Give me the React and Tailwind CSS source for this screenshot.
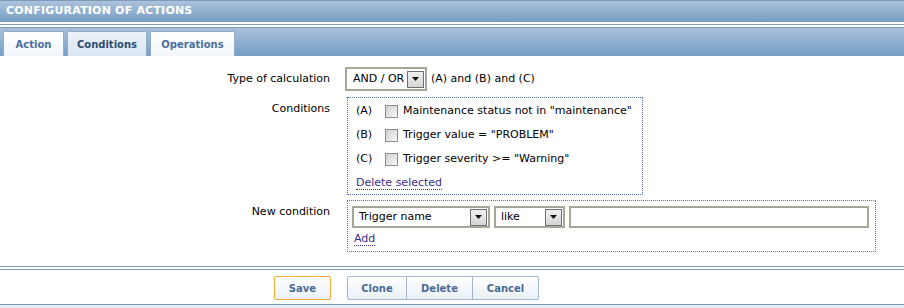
import React from "react";

const font = { fontFamily: '"DejaVu Sans", Verdana, sans-serif' };

function Select({ value, width }) {
  return (
    <div
      className="flex items-center justify-between h-[22px] border-2 border-[#a8a696] bg-white pl-[5px] pr-[1px]"
      style={{ width }}
    >
      <span className="text-[11px] text-black">{value}</span>
      <Arrow />
    </div>
  );
}

function Arrow() {
  return (
    <span className="flex items-center justify-center w-[17px] h-[17px] border border-[#6f6f6f] bg-gradient-to-b from-[#f0f0f0] to-[#d6d6d6]">
      <svg width="7" height="4" viewBox="0 0 7 4">
        <path d="M0 0h7L3.5 4z" fill="#111" />
      </svg>
    </span>
  );
}

function Checkbox() {
  return (
    <span className="inline-block w-[13px] h-[13px] border border-[#8c8c8c] bg-gradient-to-br from-[#d2d2d2] to-[#f6f6f6]" />
  );
}

function CondRow({ tag, text }) {
  return (
    <div className="flex items-center h-[24px]">
      <span className="w-[29px] text-[11px] text-black">{tag}</span>
      <Checkbox />
      <span className="ml-[5px] text-[11px] text-black">{text}</span>
    </div>
  );
}

function Tab({ label, active }) {
  return (
    <div
      className={
        "h-[25px] mr-[3px] flex items-center justify-center border border-b-0 border-[#93adcb] text-[10px] font-bold " +
        (active
          ? "bg-gradient-to-b from-[#edf3f9] to-[#d9e5f1] text-[#2e4a70]"
          : "bg-gradient-to-b from-[#ffffff] to-[#f1f5fa] text-[#4a6e9d]")
      }
      style={{ width: label === "Action" ? 61 : label === "Conditions" ? 80 : 85 }}
    >
      {label}
    </div>
  );
}

function Btn({ label, className = "" }) {
  return (
    <button
      className={
        "h-[24px] border text-[10px] font-bold text-[#4b6b95] bg-gradient-to-b from-[#ffffff] to-[#eaf0f7] " +
        className
      }
    >
      {label}
    </button>
  );
}

export default function App() {
  return (
    <div className="w-[904px] h-[308px] bg-white overflow-hidden" style={font}>
      {/* header */}
      <div className="h-[22px] border-t border-[#7e9bbb] bg-gradient-to-b from-[#abc2da] to-[#769ec5] flex items-center pl-[6px]">
        <span className="text-[11px] font-bold text-white tracking-[0.2px]">CONFIGURATION OF ACTIONS</span>
      </div>
      <div className="h-[2px]" />
      <div className="h-[1px] bg-[#7f9cbb]" />
      <div className="h-[2px]" />
      {/* tabs */}
      <div className="h-[29px] border-t border-[#7f9cbb] bg-gradient-to-b from-[#a9c0d9] to-[#759ec6] flex items-end pl-[3px]">
        <Tab label="Action" />
        <Tab label="Conditions" active />
        <Tab label="Operations" />
      </div>

      {/* form */}
      <div className="h-[210px] grid grid-cols-[345px_1fr] content-start text-[11px] text-black">
        <div className="mt-[11px] h-[24px] flex items-center justify-end pr-[15px]">Type of calculation</div>
        <div className="mt-[11px] h-[24px] flex items-center">
          <div className="flex items-center justify-between w-[82px] h-[24px] border-2 border-[#a8a696] pl-[6px] pr-[1px]">
            <span>AND / OR</span>
            <Arrow />
          </div>
          <span className="ml-[4px]">(A) and (B) and (C)</span>
        </div>

        <div className="mt-[6px] pt-[4px] text-right pr-[15px]">Conditions</div>
        <div className="mt-[6px] ml-[2px]">
          <div className="w-[296px] h-[98px] border border-dotted border-[#5a6fb5] pl-[8px] pt-[1px]">
            <CondRow tag="(A)" text={'Maintenance status not in "maintenance"'} />
            <CondRow tag="(B)" text={'Trigger value = "PROBLEM"'} />
            <CondRow tag="(C)" text={'Trigger severity >= "Warning"'} />
            <div className="h-[24px] flex items-center">
              <span className="text-[#3b2e8c] border-b border-dotted border-[#3b2e8c] leading-[13px]">Delete selected</span>
            </div>
          </div>
        </div>

        <div className="mt-[5px] pt-[4px] text-right pr-[15px]">New condition</div>
        <div className="mt-[5px] ml-[2px]">
          <div className="w-[529px] h-[52px] border border-dotted border-[#5a6fb5] pl-[4px] pt-[5px]">
            <div className="flex items-center gap-[4px]">
              <Select value="Trigger name" width={138} />
              <Select value="like" width={71} />
              <div className="w-[300px] h-[22px] border-2 border-[#a8a696] bg-white" />
            </div>
            <div className="mt-[3px] pl-[2px] h-[16px] flex items-center">
              <span className="text-[#3b2e8c] border-b border-dotted border-[#3b2e8c] leading-[13px]">Add</span>
            </div>
          </div>
        </div>
      </div>

      {/* footer */}
      <div className="h-[1px] bg-[#7f9cbb]" />
      <div className="h-[2px]" />
      <div className="h-[1px] bg-[#7f9cbb]" />
      <div className="h-[34px] flex items-start pt-[6px]">
        <Btn label="Save" className="ml-[274px] w-[57px] rounded-[2px] border-[#f4a73a]" />
        <div className="ml-[16px] flex">
          <Btn label="Clone" className="w-[60px] rounded-l-[2px] border-[#a2b7d2]" />
          <Btn label="Delete" className="w-[66px] border-l-0 border-[#a2b7d2]" />
          <Btn label="Cancel" className="w-[66px] border-l-0 rounded-r-[2px] border-[#a2b7d2]" />
        </div>
      </div>
      <div className="h-[1px] bg-[#7f9cbb]" />
      <div className="h-[4px] bg-[#e9edf1]" />
    </div>
  );
}
